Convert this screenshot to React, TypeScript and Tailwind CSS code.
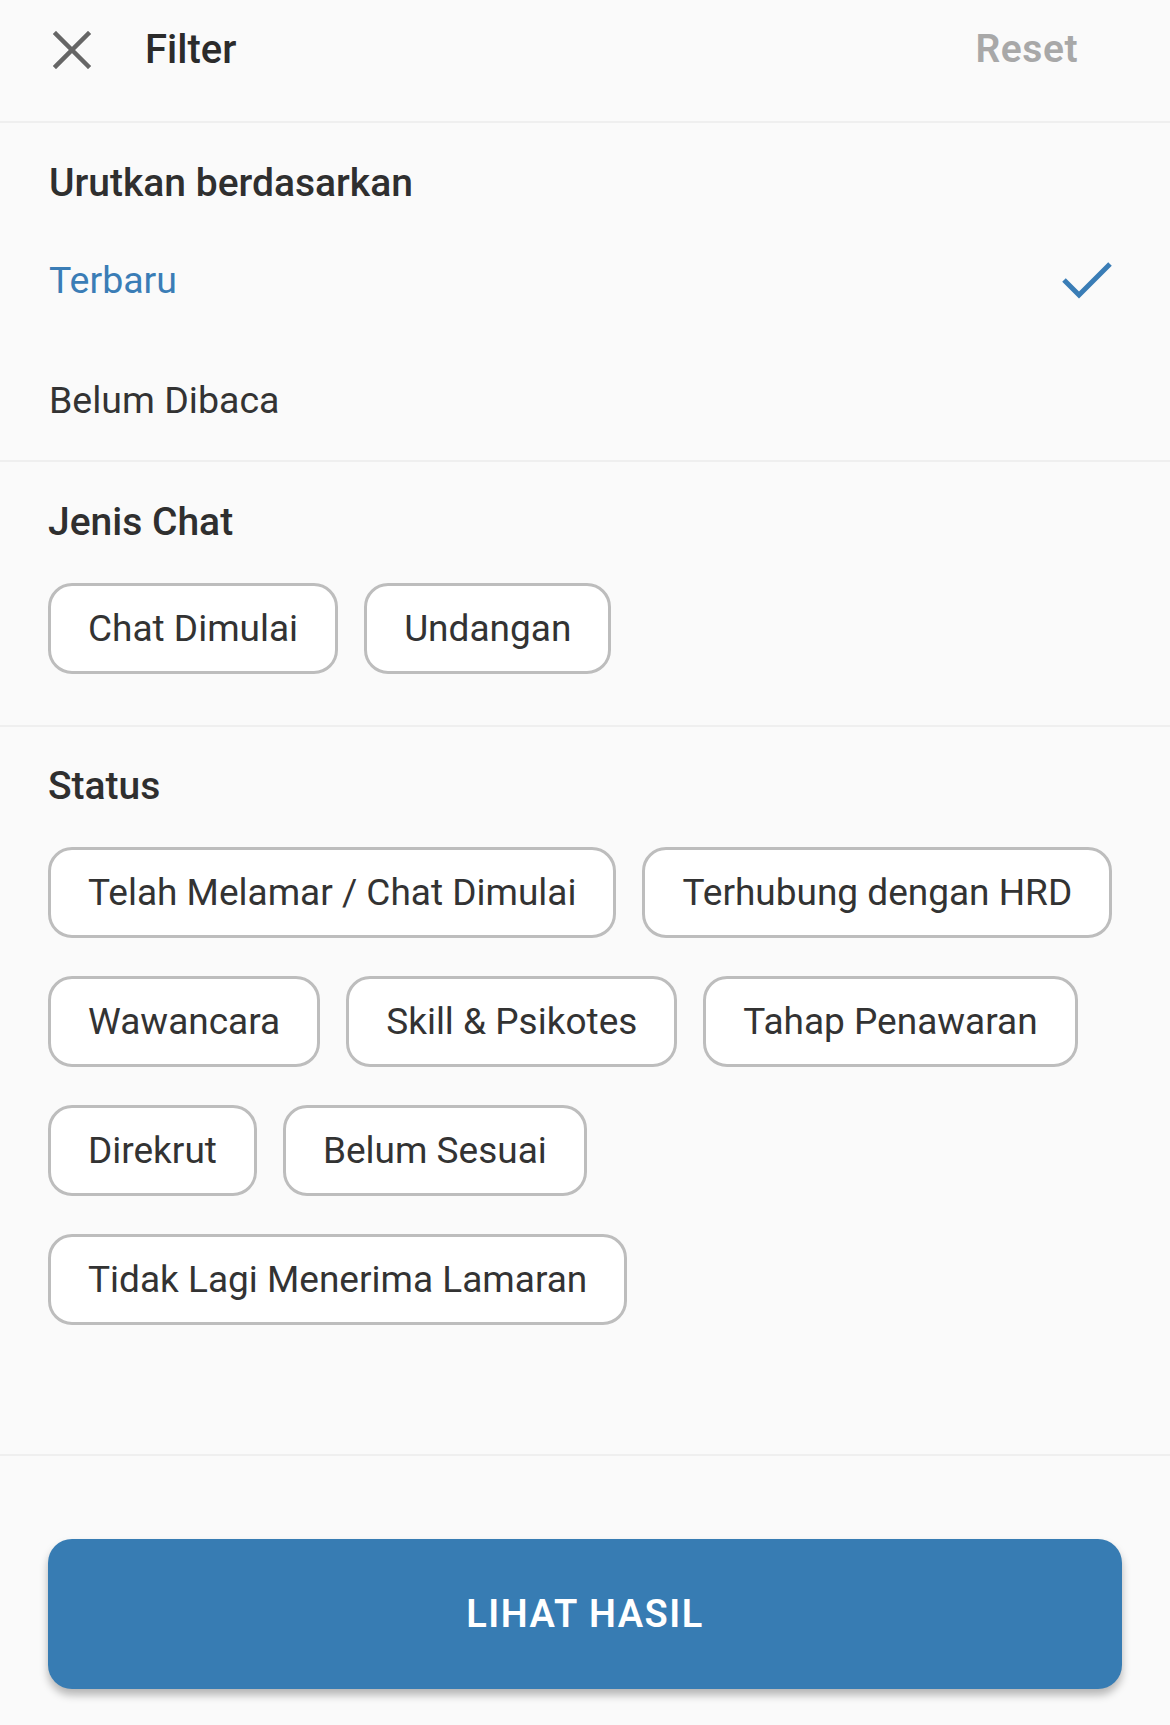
import { useState } from "react";

const jenisChat = ["Chat Dimulai", "Undangan"];

const statusList = [
  "Telah Melamar / Chat Dimulai",
  "Terhubung dengan HRD",
  "Wawancara",
  "Skill & Psikotes",
  "Tahap Penawaran",
  "Direkrut",
  "Belum Sesuai",
  "Tidak Lagi Menerima Lamaran",
];

function Chip({ label }: { label: string }) {
  return (
    <button className="h-[91px] px-[37px] rounded-[24px] border-[3px] border-[#bdbdbd] bg-white text-[37px] text-[#333333] leading-none">
      {label}
    </button>
  );
}

export default function App() {
  const [sort, setSort] = useState("Terbaru");

  return (
    <div className="min-h-[1725px] w-[1170px] bg-[#fafafa] flex flex-col font-['Roboto',sans-serif]">
      {/* Header */}
      <div className="h-[123px] border-b-[2px] border-[#efefef]">
        <div className="h-[99px] flex items-center pl-[53px] pr-[92px]">
          <svg width="38" height="38" viewBox="0 0 38 38" className="shrink-0">
            <path d="M3 3 L35 35 M35 3 L3 35" stroke="#666666" strokeWidth="4.5" strokeLinecap="square" />
          </svg>
          <div className="ml-[54px] text-[40px] font-medium text-[#2b2b2b]">Filter</div>
          <div className="ml-auto text-[39px] font-semibold text-[#a8a8a8] tracking-[0.5px]">Reset</div>
        </div>
      </div>

      {/* Urutkan */}
      <div className="border-b-[2px] border-[#efefef] pt-[37px]">
        <div className="px-[49px] h-[46px] flex items-center text-[39px] font-medium text-[#2f2f2f]">
          Urutkan berdasarkan
        </div>
        <div className="mt-[14px]">
          {["Terbaru", "Belum Dibaca"].map((opt) => (
            <div
              key={opt}
              onClick={() => setSort(opt)}
              className="h-[120px] flex items-center pl-[49px] pr-[57px]"
            >
              <span
                className={`text-[37.5px] ${
                  sort === opt ? "text-[#3a7db6]" : "text-[#333333]"
                }`}
              >
                {opt}
              </span>
              {sort === opt && (
                <svg width="52" height="38" viewBox="0 0 52 38" className="ml-auto">
                  <path d="M3 19 L18 34 L49 3" stroke="#3a7db6" strokeWidth="5" fill="none" />
                </svg>
              )}
            </div>
          ))}
        </div>
      </div>

      {/* Jenis Chat */}
      <div className="border-b-[2px] border-[#efefef] pt-[37px] pb-[51px] pl-[48px] pr-[30px]">
        <div className="h-[46px] flex items-center text-[39px] font-medium text-[#2f2f2f]">
          Jenis Chat
        </div>
        <div className="mt-[38px] flex flex-wrap gap-[26px]">
          {jenisChat.map((c) => (
            <Chip key={c} label={c} />
          ))}
        </div>
      </div>

      {/* Status */}
      <div className="border-b-[2px] border-[#efefef] pt-[36px] pb-[129px] pl-[48px] pr-[30px]">
        <div className="h-[46px] flex items-center text-[39px] font-medium text-[#2f2f2f]">
          Status
        </div>
        <div className="mt-[38px] flex flex-wrap gap-x-[26px] gap-y-[38px]">
          {statusList.map((s) => (
            <Chip key={s} label={s} />
          ))}
        </div>
      </div>

      {/* Footer */}
      <div className="pt-[83px] px-[48px] pb-[37px]">
        <button className="w-full h-[150px] rounded-[24px] bg-[#377cb3] text-white text-[38px] font-semibold tracking-[1.5px] shadow-[0_6px_8px_rgba(0,0,0,0.28)]">
          LIHAT HASIL
        </button>
      </div>
    </div>
  );
}
